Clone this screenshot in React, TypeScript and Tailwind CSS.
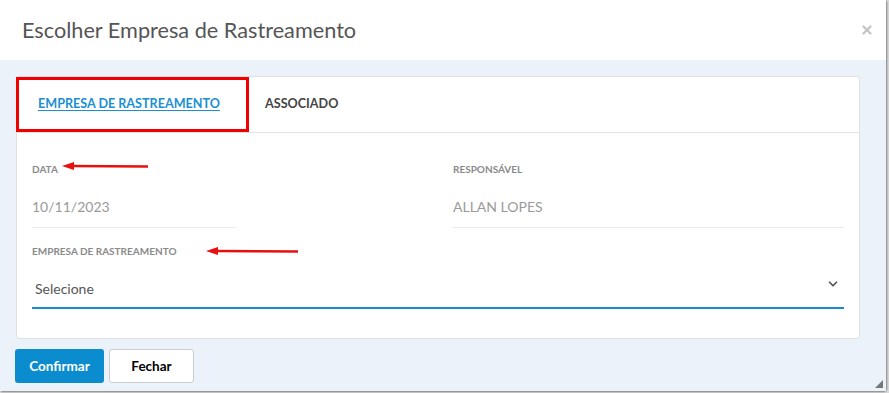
import { ChevronDown, X } from "lucide-react";

function RedArrow({ width }: { width: number }) {
  return (
    <svg width={width} height="10" viewBox={`0 0 ${width} 10`} className="shrink-0">
      <line x1="8" y1="5" x2={width} y2="5.5" stroke="#e8100f" strokeWidth="2.5" />
      <polygon points="0,5 12,1 12,9" fill="#e8100f" />
    </svg>
  );
}

function Field({ label, value, width }: { label: string; value: string; width: string }) {
  return (
    <div className={`flex flex-col ${width}`}>
      <span className="text-[10px] font-bold text-[#8a8a8a] leading-none">{label}</span>
      <span className="mt-[26px] text-[14px] text-[#9a9a9a] leading-none">{value}</span>
      <div className="mt-[13px] h-px bg-[#ececec]" />
    </div>
  );
}

export default function App() {
  return (
    <div className="flex h-[393px] w-[889px] bg-[#d9d9d9] font-['Lato',sans-serif]">
      <div className="flex h-[391px] w-[886px] flex-col rounded-br-[4px] bg-white shadow-[1px_1px_2px_rgba(0,0,0,0.4)]">
        {/* Header */}
        <div className="flex h-[60px] shrink-0 items-center justify-between pl-[22px] pr-[12px]">
          <h4 className="text-[21.7px] text-[#555555]">Escolher Empresa de Rastreamento</h4>
          <X className="h-[14px] w-[14px] text-[#c4c4c4]" strokeWidth={4} />
        </div>

        {/* Body */}
        <div className="relative flex flex-1 flex-col bg-[#ebf2f9] pl-[16px] pr-[26px] pt-[16px]">
          <div className="flex h-[263px] flex-col rounded-[3px] border border-[#e0e0e0] bg-white">
            {/* Tabs */}
            <div className="flex h-[56px] shrink-0 items-center border-b border-[#e3e3e3]">
              <div className="-ml-px flex h-[55px] w-[233px] items-center border-[3px] border-[#f00000] pl-[19px]">
                <span className="text-[12.6px] font-bold text-[#1b8fd2] underline underline-offset-2">
                  EMPRESA DE RASTREAMENTO
                </span>
              </div>
              <span className="ml-[16px] text-[12.6px] font-bold text-[#444444]">ASSOCIADO</span>
            </div>

            {/* Content */}
            <div className="flex flex-col px-[15px] pt-[31px]">
              <div className="flex">
                <div className="relative">
                  <Field label="DATA" value="10/11/2023" width="w-[205px]" />
                  <div className="absolute left-[30px] top-[-3px]">
                    <RedArrow width={86} />
                  </div>
                </div>
                <div className="ml-[216px] flex-1">
                  <Field label="RESPONSÁVEL" value="ALLAN LOPES" width="w-full" />
                </div>
              </div>

              <div className="mt-[18px] flex items-center gap-[30px]">
                <span className="text-[10px] font-bold text-[#8a8a8a] leading-none">
                  EMPRESA DE RASTREAMENTO
                </span>
                <RedArrow width={92} />
              </div>

              <div className="mt-[18px] flex h-[35px] items-start justify-between border-b-2 border-[#1a8ad0] pl-[3px] pr-[4px]">
                <span className="mt-[8px] text-[14px] leading-none text-[#555555]">Selecione</span>
                <ChevronDown className="mt-[3px] h-[14px] w-[14px] text-[#555555]" strokeWidth={3} />
              </div>
            </div>
          </div>

          {/* Footer buttons */}
          <div className="-ml-px mt-[10px] flex gap-[5px]">
            <button className="h-[34px] w-[89px] rounded-[3px] bg-[#0b8ccf] text-[13.5px] font-bold text-white">
              Confirmar
            </button>
            <button className="h-[34px] w-[85px] rounded-[3px] border border-[#cccccc] bg-white text-[13.5px] font-bold text-black">
              Fechar
            </button>
          </div>

          <svg width="8" height="8" viewBox="0 0 8 8" className="absolute bottom-[3px] right-[3px]">
            <polygon points="8,0 8,8 0,8" fill="#777777" />
          </svg>
        </div>
      </div>
    </div>
  );
}
